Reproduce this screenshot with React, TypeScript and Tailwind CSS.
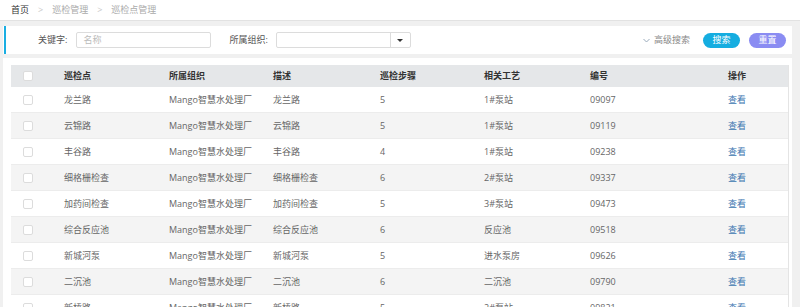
import React from "react";

const rows = [
  ["龙兰路", "龙兰路", "5", "1#泵站", "09097"],
  ["云锦路", "云锦路", "5", "1#泵站", "09119"],
  ["丰谷路", "丰谷路", "4", "1#泵站", "09238"],
  ["细格栅检查", "细格栅检查", "6", "2#泵站", "09337"],
  ["加药间检查", "加药间检查", "5", "3#泵站", "09473"],
  ["综合反应池", "综合反应池", "6", "反应池", "09518"],
  ["新城河泵", "新城河泵", "5", "进水泵房", "09626"],
  ["二沉池", "二沉池", "6", "二沉池", "09790"],
  ["新桥路", "新桥路", "5", "2#泵站", "09821"],
];

const Checkbox = () => (
  <span className="block w-[10px] h-[10px] rounded-[2px] border border-[#dcdcdc] bg-white" />
);

const App = () => {
  return (
    <div
      className="w-[800px] h-[307px] overflow-hidden bg-[#f0f0f0] text-[9px] text-[#666]"
      style={{ fontFamily: '"Open Sans", "Noto Sans CJK SC", sans-serif' }}
    >
      {/* Breadcrumb */}
      <div className="h-[21px] bg-white border-b border-[#e2e2e2] flex items-center pl-[11px] gap-[9px]">
        <span className="text-[#333]">首页</span>
        <span className="text-[#c8c8c8]">&gt;</span>
        <span className="text-[#aaa]">巡检管理</span>
        <span className="text-[#c8c8c8]">&gt;</span>
        <span className="text-[#aaa]">巡检点管理</span>
      </div>

      {/* Filter panel */}
      <div className="mt-[5px] ml-[3px] w-[789px] h-[28px] bg-white flex items-center relative">
        <span className="absolute left-[1px] top-0 h-full w-[2px] bg-[#1aaee2]" />
        <span className="ml-[35px] text-[#555]">关键字:</span>
        <div className="ml-[9px] w-[135px] h-[16px] border border-[#dcdcdc] rounded-[2px] flex items-center pl-[6px] text-[#bbb]">
          名称
        </div>
        <span className="ml-[18px] text-[#555]">所属组织:</span>
        <div className="ml-[8px] w-[135px] h-[16px] border border-[#dcdcdc] rounded-[2px] flex">
          <div className="flex-1" />
          <div className="w-[20px] border-l border-[#dcdcdc] flex items-center justify-center">
            <span className="block w-0 h-0 border-l-[3px] border-r-[3px] border-t-[3px] border-l-transparent border-r-transparent border-t-[#333]" />
          </div>
        </div>
        <div className="ml-auto flex items-center gap-[4px] text-[#888]">
          <svg width="7" height="5" viewBox="0 0 7 5" fill="none" stroke="#9ab" strokeWidth="1">
            <path d="M0.5 1 L3.5 4 L6.5 1" />
          </svg>
          <span>高级搜索</span>
        </div>
        <button className="ml-[13px] w-[37px] h-[15px] rounded-full bg-[#15ade0] text-white text-[9px]">
          搜索
        </button>
        <button className="ml-[9px] mr-[6px] w-[37px] h-[15px] rounded-full bg-[#8a8cf2] text-white text-[9px]">
          重置
        </button>
      </div>

      {/* Table card */}
      <div className="mt-[4px] ml-[3px] w-[789px] h-[300px] bg-white pt-[7px] pl-[8px] pr-[3px]">
        <div className="border-r border-[#e4e4e4]">
          <div className="h-[22px] bg-[#e5e7e9] flex items-center text-[#333] font-semibold">
            <div className="w-[53px] pl-[12px]">
              <Checkbox />
            </div>
            <div className="w-[105px]">巡检点</div>
            <div className="w-[104px]">所属组织</div>
            <div className="w-[107px]">描述</div>
            <div className="w-[104px]">巡检步骤</div>
            <div className="w-[106px]">相关工艺</div>
            <div className="w-[138px]">编号</div>
            <div>操作</div>
          </div>
          {rows.map((r, i) => (
            <div
              key={i}
              className={`h-[26px] flex items-center border-b border-[#ececec] ${
                i % 2 === 1 ? "bg-[#f4f4f4]" : "bg-white"
              }`}
            >
              <div className="w-[53px] pl-[12px]">
                <Checkbox />
              </div>
              <div className="w-[105px]">{r[0]}</div>
              <div className="w-[104px]">Mango智慧水处理厂</div>
              <div className="w-[107px]">{r[1]}</div>
              <div className="w-[104px]">{r[2]}</div>
              <div className="w-[106px]">{r[3]}</div>
              <div className="w-[138px]">{r[4]}</div>
              <div className="text-[#3b76b0]">查看</div>
            </div>
          ))}
        </div>
      </div>
    </div>
  );
};

export default App;
